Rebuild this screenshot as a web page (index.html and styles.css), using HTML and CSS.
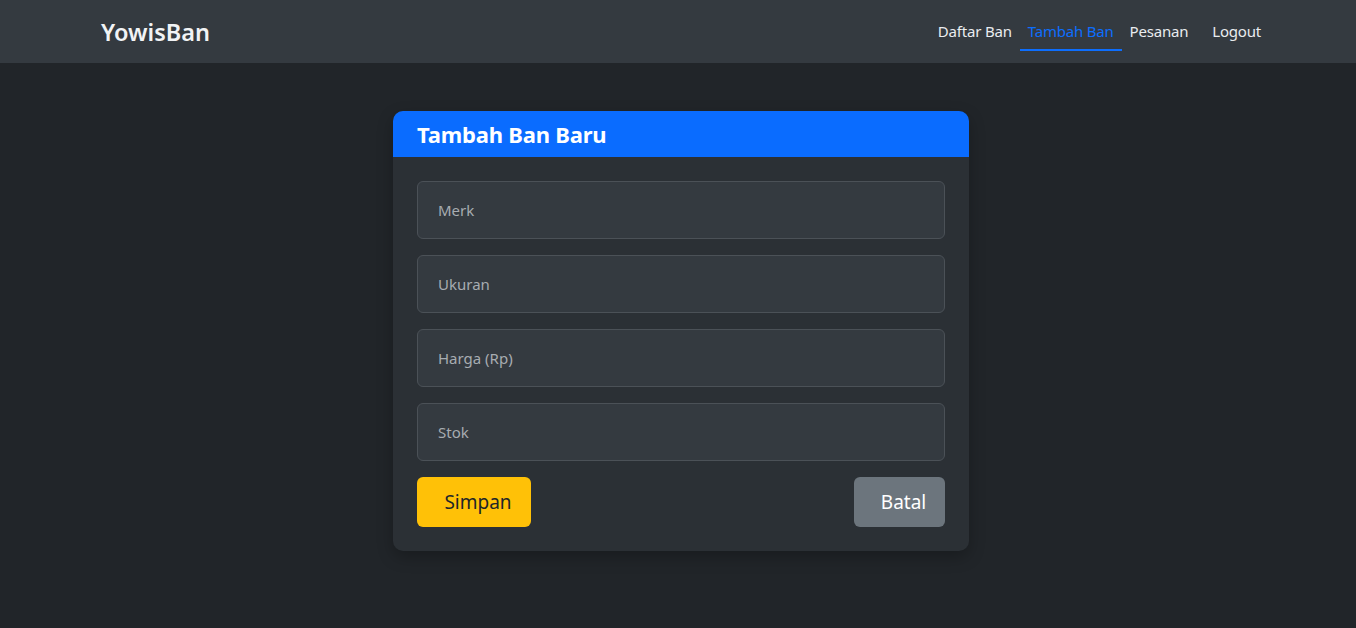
FILE: index.html
```html
<!DOCTYPE html>
<html lang="id">
<head>
<meta charset="utf-8">
<title>YowisBan - Tambah Ban</title>
<link rel="stylesheet" href="styles.css">
</head>
<body>
<nav class="navbar">
  <a class="brand" href="#">YowisBan</a>
  <ul class="nav">
    <li><a class="nav-link" href="#">Daftar Ban</a></li>
    <li><a class="nav-link active" href="#">Tambah Ban</a></li>
    <li><a class="nav-link" href="#">Pesanan</a></li>
    <li><a class="nav-link logout" href="#">Logout</a></li>
  </ul>
</nav>
<main class="main">
  <section class="card">
    <header class="card-header">
      <h1 class="card-title">Tambah Ban Baru</h1>
    </header>
    <form class="card-body">
      <input class="field" type="text" placeholder="Merk">
      <input class="field" type="text" placeholder="Ukuran">
      <input class="field" type="text" placeholder="Harga (Rp)">
      <input class="field" type="text" placeholder="Stok">
      <div class="actions">
        <button type="button" class="btn btn-save">Simpan</button>
        <button type="button" class="btn btn-cancel">Batal</button>
      </div>
    </form>
  </section>
</main>
</body>
</html>
```
FILE: styles.css
```css
* { box-sizing: border-box; }
html, body { margin: 0; padding: 0; }
body {
  background: #212529;
  color: #dee2e6;
  font-family: "Noto Sans", "Open Sans", "DejaVu Sans", sans-serif;
  font-size: 16px;
  height: 628px;
  overflow: hidden;
}
.navbar {
  height: 63px;
  background: #343a40;
  display: flex;
  align-items: center;
  justify-content: space-between;
  padding: 0 87px 0 101px;
}
.brand {
  color: #f1f3f5;
  text-decoration: none;
  font-size: 23.5px;
  font-weight: 600;
  letter-spacing: 0;
}
.nav {
  list-style: none;
  margin: 0;
  padding: 0;
  display: flex;
  align-items: center;
  height: 63px;
}
.nav li { height: 100%; display: flex; align-items: center; }
.nav-link {
  display: block;
  color: #e9ecef;
  text-decoration: none;
  font-size: 15px;
  padding: 7px 8px 8px;
  border-bottom: 2px solid transparent;
  margin-top: 2px;
  letter-spacing: -0.2px;
}
.nav-link.active {
  color: #0d6efd;
  border-bottom-color: #0d6efd;
}
.nav-link.logout { margin-left: 8px; }
.main {
  display: flex;
  justify-content: center;
  padding: 48px 0 0 6px;
}
.card {
  width: 576px;
  background: #2b3035;
  border-radius: 10px;
  overflow: hidden;
  box-shadow: 0 6px 16px rgba(0, 0, 0, 0.25);
}
.card-header {
  background: #0a6cff;
  height: 46px;
  display: flex;
  align-items: center;
  padding: 0 24px 1px;
}
.card-title {
  margin: 0;
  color: #ffffff;
  font-size: 22px;
  font-weight: 700;
  letter-spacing: -0.2px;
}
.card-body {
  padding: 24px 24px 24px;
  display: flex;
  flex-direction: column;
  gap: 16px;
}
.field {
  height: 58px;
  width: 100%;
  background: #343a40;
  border: 1px solid #4b5157;
  border-radius: 6px;
  padding: 0 20px;
  color: #dee2e6;
  font-family: inherit;
  font-size: 15px;
  outline: none;
}
.field::placeholder { color: #a7acb1; opacity: 1; }
.actions {
  display: flex;
  justify-content: space-between;
}
.btn {
  height: 50px;
  border: none;
  border-radius: 6px;
  font-family: inherit;
  font-size: 19px;
  padding: 0 0 0 8px;
  cursor: pointer;
}
.btn-save {
  width: 114px;
  background: #ffc107;
  color: #212529;
}
.btn-cancel {
  width: 91px;
  background: #6c757d;
  color: #ffffff;
}
```
